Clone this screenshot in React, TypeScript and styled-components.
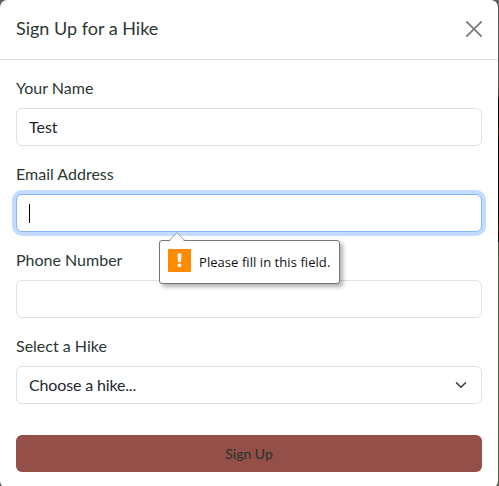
import React from 'react';
import styled, { createGlobalStyle } from 'styled-components';

const GlobalStyle = createGlobalStyle`
  *, *::before, *::after { box-sizing: border-box; }
  html, body { margin: 0; height: 100%; overflow: hidden; }
  body {
    background: linear-gradient(#666 0, #6b6b6b 80px, #5c504a 96px, #020706 99px, #080a06 126px, #3a210b 132px, #030605 140px, #080806 215px, #2a1a0c 228px, #030504 241px, #60665b 243px, #666c61 486px);
    font-family: Lato, sans-serif;
    font-size: 16px;
    line-height: 24px;
    color: #2b3834;
  }
`;

const Modal = styled.section`
  width: 500px;
  height: 490px;
  margin: -1px 0 0 -1px;
  border: 1px solid rgba(0, 0, 0, 0.18);
  border-radius: 8px;
  background: #fff;
  background-clip: padding-box;
`;

const Header = styled.header`
  display: flex;
  align-items: center;
  justify-content: space-between;
  height: 60px;
  padding: 0 16px;
  border-bottom: 1px solid #dee2e6;
`;

const Title = styled.h1`
  margin: 0;
  padding-bottom: 4px;
  font-size: 18px;
  font-weight: 400;
  line-height: 30px;
  white-space: nowrap;
`;

const CloseButton = styled.button`
  display: flex;
  padding: 0;
  margin-top: -2px;
  border: 0;
  background: none;
  svg { display: block; }
`;

const Form = styled.form`
  display: flex;
  flex-direction: column;
  gap: 16px;
  padding: 16px;
`;

const Field = styled.div`
  display: flex;
  flex-direction: column;
  gap: 8px;
  position: relative;
`;

const Label = styled.label`
  height: 24px;
  white-space: nowrap;
`;

const Control = styled.div<{ $focused?: boolean }>`
  display: flex;
  align-items: center;
  justify-content: space-between;
  height: 38px;
  padding: 0 12px;
  border: 1px solid ${p => (p.$focused ? '#86b7fe' : '#dee2e6')};
  border-radius: 6px;
  color: #24282c;
  background: #fff;
  box-shadow: ${p => (p.$focused ? '0 0 0 4px #c2dbff' : 'none')};
`;

const Option = styled.span`
  letter-spacing: -0.15px;
`;

const Caret = styled.span`
  width: 1px;
  height: 19px;
  background: #000;
`;

const Submit = styled.button`
  height: 37px;
  margin-top: 15px;
  border: 0;
  border-radius: 6px;
  background: #934f48;
  color: #26332f;
  font: 400 14px/21px Lato, sans-serif;
`;

const Tooltip = styled.div`
  position: absolute;
  z-index: 1;
  top: 78px;
  left: 143px;
  display: flex;
  align-items: center;
  width: 181px;
  height: 44px;
  padding: 0 8px;
  gap: 8px;
  border: 1px solid #767676;
  border-radius: 3px;
  background: #fff;
  box-shadow: 3px 3px 4px rgba(0, 0, 0, 0.3);
  color: #111;
  font: 13px/20px "Open Sans", sans-serif;
  white-space: nowrap;
`;

const Pointer = styled.svg`
  position: absolute;
  top: -9px;
  left: 8px;
`;

const WarningIcon = styled.svg`
  flex: none;
  margin-top: -3px;
`;

const Message = styled.span`
  letter-spacing: 0.06px;
`;

export default function App() {
  return (
    <>
      <GlobalStyle />
      <Modal role="dialog" aria-label="Sign Up for a Hike">
        <Header>
          <Title>Sign Up for a Hike</Title>
          <CloseButton aria-label="Close">
            <svg width="16" height="16" viewBox="0 0 16 16" fill="none" stroke="#777" strokeWidth="1.7" strokeLinecap="round">
              <path d="M.8.8 15.2 15.2M15.2.8.8 15.2" />
            </svg>
          </CloseButton>
        </Header>
        <Form>
          <Field>
            <Label>Your Name</Label>
            <Control>Test</Control>
          </Field>
          <Field>
            <Label>Email Address</Label>
            <Control $focused><Caret /></Control>
            <Tooltip role="alert">
              <Pointer width="18" height="10" viewBox="0 0 18 10">
                <path d="M1 10 L9 1 L17 10" fill="#fff" />
                <path d="M1 8.7 L9 .8 L17 8.7" fill="none" stroke="#999" />
              </Pointer>
              <WarningIcon width="23" height="23" viewBox="0 0 23 23">
                <rect width="23" height="23" rx="1" fill="#ff8c00" />
                <path d="M9.5 4.5h4l-.4 8.5h-3.2z" fill="#fff" />
                <circle cx="11.5" cy="16.3" r="1.9" fill="#fff" />
              </WarningIcon>
              <Message>Please fill in this field.</Message>
            </Tooltip>
          </Field>
          <Field>
            <Label>Phone Number</Label>
            <Control />
          </Field>
          <Field>
            <Label>Select a Hike</Label>
            <Control>
              <Option>Choose a hike...</Option>
              <svg width="16" height="12" viewBox="0 0 16 16" fill="none" stroke="#343a40" strokeWidth="2" strokeLinecap="round" strokeLinejoin="round">
                <path d="m2 5 6 6 6-6" />
              </svg>
            </Control>
          </Field>
          <Submit type="button">Sign Up</Submit>
        </Form>
      </Modal>
    </>
  );
}
